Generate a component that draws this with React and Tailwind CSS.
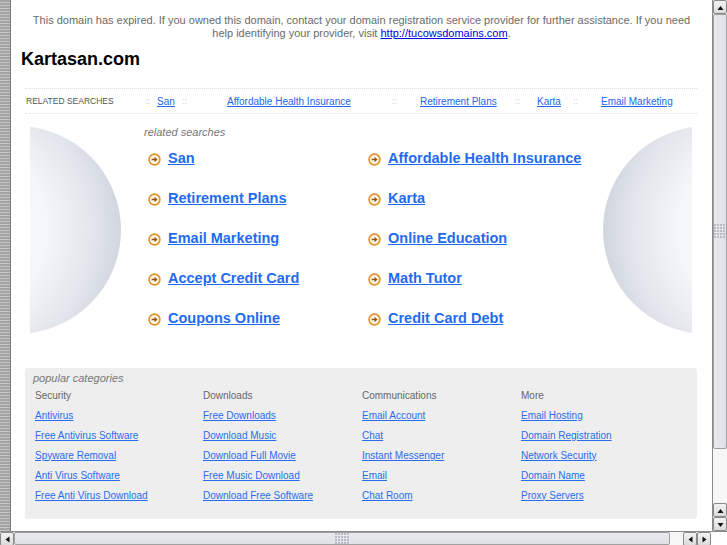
import React from "react";

const Tri = ({ dir }) => {
  const pts = {
    up: "0.5,6 3.5,2 6.5,6",
    down: "0.5,2 3.5,6 6.5,2",
    left: "5.5,0.5 1.5,3.5 5.5,6.5",
    right: "1.5,0.5 5.5,3.5 1.5,6.5",
  }[dir];
  return (
    <svg width="7" height="7" viewBox="0 0 7 7">
      <polygon points={pts} fill="#111" />
    </svg>
  );
};

const SBtn = ({ dir, cls = "" }) => (
  <div
    className={`w-[14px] h-[14px] shrink-0 bg-[linear-gradient(#f2f2f2,#dcdcdc)] border border-[#8a8a8a] rounded-[2px] flex items-center justify-center ${cls}`}
  >
    <Tri dir={dir} />
  </div>
);

const Grip = ({ vertical }) => {
  const cols = vertical ? 4 : 5;
  const rows = vertical ? 5 : 4;
  const dots = [];
  for (let r = 0; r < rows; r++)
    for (let c = 0; c < cols; c++)
      dots.push(<rect key={`${r}-${c}`} x={c * 3} y={r * 3} width="2" height="2" fill="#b9bcc4" />);
  return (
    <svg width={cols * 3} height={rows * 3}>
      {dots}
    </svg>
  );
};

const Arrow = () => (
  <svg width="13" height="13" viewBox="0 0 13 13" className="shrink-0">
    <circle cx="6.5" cy="6.5" r="5.4" fill="#fff7ea" stroke="#e58f25" strokeWidth="1.6" />
    <path d="M3.6 6.5 H7.6" stroke="#9a5208" strokeWidth="1.6" />
    <polygon points="6.6,3.8 9.6,6.5 6.6,9.2" fill="#9a5208" />
  </svg>
);

const Sphere = ({ side }) => {
  const left = side === "left";
  return (
    <svg width={left ? 91 : 89} height="212" viewBox={left ? "0 0 91 212" : "0 0 89 212"} className="shrink-0">
      <defs>
        <radialGradient id={`g-${side}`} cx={left ? "0.2" : "0.8"} cy="0.5" r="0.8">
          <stop offset="0" stopColor="#ffffff" />
          <stop offset="0.55" stopColor="#f5f6f8" />
          <stop offset="0.85" stopColor="#e1e4eb" />
          <stop offset="1" stopColor="#d1d5df" />
        </radialGradient>
      </defs>
      <circle cx={left ? -13 : 104} cy="106" r="104" fill={`url(#g-${side})`} />
    </svg>
  );
};

const big = [
  ["San", "Affordable Health Insurance"],
  ["Retirement Plans", "Karta"],
  ["Email Marketing", "Online Education"],
  ["Accept Credit Card", "Math Tutor"],
  ["Coupons Online", "Credit Card Debt"],
];

const cats = [
  { h: "Security", w: "w-[168px]", l: ["Antivirus", "Free Antivirus Software", "Spyware Removal", "Anti Virus Software", "Free Anti Virus Download"] },
  { h: "Downloads", w: "w-[159px]", l: ["Free Downloads", "Download Music", "Download Full Movie", "Free Music Download", "Download Free Software"] },
  { h: "Communications", w: "w-[159px]", l: ["Email Account", "Chat", "Instant Messenger", "Email", "Chat Room"] },
  { h: "More", w: "w-[150px]", l: ["Email Hosting", "Domain Registration", "Network Security", "Domain Name", "Proxy Servers"] },
];

const Sep = ({ w }) => <div className={`${w} shrink-0 text-[#cccccc] text-[9px] leading-[12px]`}>::</div>;
const RLink = ({ w, t }) => (
  <div className={`${w} shrink-0 leading-[12px]`}>
    <a className="text-[#2266ee] underline text-[10px]">{t}</a>
  </div>
);

export default function App() {
  return (
    <div className="w-[727px] h-[545px] flex flex-col overflow-hidden bg-white font-['Liberation_Sans',Arial,sans-serif]">
      <div className="flex flex-1 min-h-0">
        {/* left strip */}
        <div className="w-[11px] shrink-0 border-r border-[#7a7a7a] bg-[repeating-linear-gradient(to_bottom,#a3a3a3_0px,#a3a3a3_2px,#c4c4c4_2px,#c4c4c4_3px)]" />

        {/* content */}
        <div className="flex-1 min-w-0 flex flex-col">
          <p className="pt-[14px] text-center text-[11px] leading-[13px] text-[#6a6a6a]">
            This domain has expired. If you owned this domain, contact your domain registration service provider for further assistance. If you need
            <br />
            help identifying your provider, visit{" "}
            <a className="text-[#0000ee] underline">http://tucowsdomains.com</a>.
          </p>

          <h1 className="mt-[8px] pl-[10px] text-[18px] leading-[22px] font-bold text-black">Kartasan.com</h1>

          <div className="mt-[18px] ml-[14px] w-[672px] h-[26px] pb-[1px] border-y border-dotted border-[#dedede] flex items-center">
            <div className="w-[120px] shrink-0 pl-[1px] text-[8.5px] leading-[12px] text-[#555]">RELATED SEARCHES</div>
            <Sep w="w-[12px]" />
            <RLink w="w-[25px]" t="San" />
            <Sep w="w-[45px]" />
            <RLink w="w-[165px]" t="Affordable Health Insurance" />
            <Sep w="w-[28px]" />
            <RLink w="w-[95px]" t="Retirement Plans" />
            <Sep w="w-[22px]" />
            <RLink w="w-[36px]" t="Karta" />
            <Sep w="w-[28px]" />
            <RLink w="w-[96px]" t="Email Marketing" />
          </div>

          <div className="flex">
            <div className="ml-[19px] mt-[10px]">
              <Sphere side="left" />
            </div>
            <div className="ml-[23px] w-[459px] shrink-0">
              <div className="pt-[11px] text-[11px] leading-[14px] italic text-[#777]">related searches</div>
              {big.map((row, i) => (
                <div key={i} className="h-[40px] flex items-center">
                  {row.map((t, j) => (
                    <div key={j} className={`${j === 0 ? "w-[220px]" : ""} pl-[4px] flex items-center gap-[7px]`}>
                      <Arrow />
                      <a className="text-[14.5px] font-bold text-[#1f6bf2] underline">{t}</a>
                    </div>
                  ))}
                </div>
              ))}
            </div>
            <div className="mt-[10px]">
              <Sphere side="right" />
            </div>
          </div>

          <div className="mt-[29px] ml-[14px] w-[672px] rounded-[3px] bg-[#eeeeee] pb-[14px]">
            <div className="pt-[3px] pl-[8px] text-[11px] leading-[14px] italic text-[#777]">popular categories</div>
            <div className="flex pl-[10px]">
              {cats.map((c) => (
                <div key={c.h} className={`${c.w} shrink-0 text-[10px]`}>
                  <div className="h-[20px] flex items-center text-[#666]">{c.h}</div>
                  {c.l.map((t) => (
                    <div key={t} className="h-[20px] flex items-center">
                      <a className="text-[#2a6cf0] underline">{t}</a>
                    </div>
                  ))}
                </div>
              ))}
            </div>
          </div>
        </div>

        {/* vertical scrollbar */}
        <div className="w-[15px] shrink-0 border-l border-[#8a8a8a] bg-[#efefef] flex flex-col">
          <SBtn dir="up" />
          <div className="h-[435px] shrink-0 bg-[linear-gradient(to_right,#e9eaee,#dfe1e8)] border border-[#a0a0a0] rounded-[2px] flex items-center justify-center">
            <Grip vertical />
          </div>
          <div className="flex-1 bg-[#f6f6f6]" />
          <SBtn dir="up" />
          <SBtn dir="down" />
        </div>
      </div>

      {/* horizontal scrollbar */}
      <div className="h-[14px] shrink-0 flex border-t border-[#8a8a8a] bg-[#efefef]">
        <SBtn dir="left" cls="h-[13px]" />
        <div className="w-[656px] shrink-0 bg-[linear-gradient(#e9eaee,#dfe1e8)] border border-[#a0a0a0] rounded-[2px] flex items-center justify-center">
          <Grip />
        </div>
        <div className="w-[13px] shrink-0 bg-[#f6f6f6]" />
        <SBtn dir="left" cls="h-[13px]" />
        <SBtn dir="right" cls="h-[13px]" />
        <div className="flex-1 bg-white" />
      </div>
    </div>
  );
}
